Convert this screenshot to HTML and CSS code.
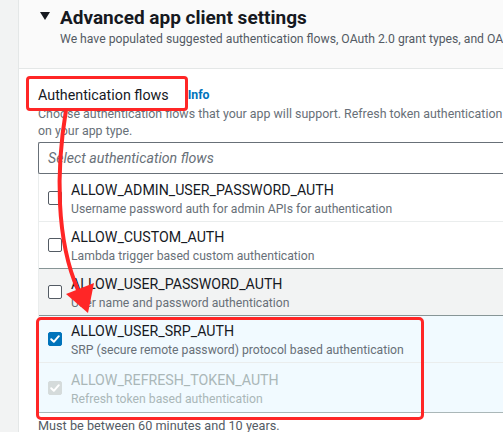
FILE: index.html
```html
<!DOCTYPE html>
<html>
<head>
<meta charset="utf-8">
<link rel="stylesheet" href="styles.css">
</head>
<body>
<div class="page">
  <div class="rail"></div>
  <div class="panel">
    <div class="header">
      <div class="title-row">
        <span class="caret"></span>
        <h2 class="title">Advanced app client settings</h2>
      </div>
      <p class="subtitle">We have populated suggested authentication flows, OAuth 2.0 grant types, and OAuth 2.0 scopes for your app type.</p>
    </div>
    <div class="body">
      <div class="label-row">
        <span class="label">Authentication flows</span>
        <a class="info">Info</a>
      </div>
      <p class="desc">Choose authentication flows that your app will support. Refresh token authentication is always enabled based<br>on your app type.</p>
      <div class="select">Select authentication flows</div>
      <div class="list">
        <div class="option first">
          <span class="box"></span>
          <div class="text">
            <div class="opt-title">ALLOW_ADMIN_USER_PASSWORD_AUTH</div>
            <div class="opt-desc">Username password auth for admin APIs for authentication</div>
          </div>
        </div>
        <div class="option">
          <span class="box"></span>
          <div class="text">
            <div class="opt-title">ALLOW_CUSTOM_AUTH</div>
            <div class="opt-desc">Lambda trigger based custom authentication</div>
          </div>
        </div>
        <div class="option hover">
          <span class="box"></span>
          <div class="text">
            <div class="opt-title">ALLOW_USER_PASSWORD_AUTH</div>
            <div class="opt-desc">User name and password authentication</div>
          </div>
        </div>
        <div class="group">
          <div class="option selected">
            <span class="box checked"><svg viewBox="0 0 14 14" width="14" height="14"><path d="M3.2 7.3 L5.8 9.8 L10.8 4.2" fill="none" stroke="#fff" stroke-width="2" stroke-linecap="round" stroke-linejoin="round"/></svg></span>
            <div class="text">
              <div class="opt-title">ALLOW_USER_SRP_AUTH</div>
              <div class="opt-desc">SRP (secure remote password) protocol based authentication</div>
            </div>
          </div>
          <div class="option selected disabled">
            <span class="box checked dis"><svg viewBox="0 0 14 14" width="14" height="14"><path d="M3.2 7.3 L5.8 9.8 L10.8 4.2" fill="none" stroke="#fff" stroke-width="2" stroke-linecap="round" stroke-linejoin="round"/></svg></span>
            <div class="text">
              <div class="opt-title">ALLOW_REFRESH_TOKEN_AUTH</div>
              <div class="opt-desc">Refresh token based authentication</div>
            </div>
          </div>
        </div>
      </div>
      <p class="hint">Must be between 60 minutes and 10 years.</p>
    </div>
  </div>
  <svg class="arrow" width="503" height="432" viewBox="0 0 503 432">
    <path d="M66 110 C 56 170, 56 240, 78 290" fill="none" stroke="#ff2626" stroke-width="4" stroke-linecap="round"/>
    <polygon points="88,313 66,294 94,283" fill="#ff2626"/>
  </svg>
</div>
</body>
</html>
```
FILE: styles.css
```css
* { box-sizing: border-box; }
html, body { margin: 0; padding: 0; }
body {
  width: 503px;
  height: 432px;
  overflow: hidden;
  font-family: Roboto, "Liberation Sans", sans-serif;
  color: #16191f;
  background: #fff;
}
.page {
  position: relative;
  display: flex;
  height: 432px;
}
.rail {
  width: 19px;
  flex: none;
  background: #f2f3f3;
  border-right: 1px solid #e4e7e7;
}
.panel {
  flex: 1;
  min-width: 0;
  background: #fff;
  overflow: hidden;
}
.header {
  height: 69px;
  background: #fafafa;
  border-bottom: 1px solid #e4e7e7;
  padding: 5px 0 0 21px;
}
.title-row {
  display: flex;
  align-items: center;
  height: 24px;
}
.caret {
  width: 0;
  height: 0;
  border-left: 5px solid transparent;
  border-right: 5px solid transparent;
  border-top: 8px solid #16191f;
  margin-right: 10px;
  margin-top: -2px;
}
.title {
  margin: 0;
  font-size: 19px;
  font-weight: 700;
  white-space: nowrap;
}
.subtitle {
  margin: 2px 0 0 20px;
  font-size: 12.2px;
  line-height: 17px;
  color: #545b64;
  white-space: nowrap;
}
.body {
  padding: 16px 0 0 19px;
}
.label-row {
  display: flex;
  align-items: center;
  height: 20px;
}
.label {
  position: relative;
  font-size: 14.3px;
  white-space: nowrap;
}
.label::after {
  content: "";
  position: absolute;
  left: -12px;
  top: -11px;
  width: 156px;
  height: 29px;
  border: 3.5px solid #ff2626;
  border-radius: 4px;
}
.info {
  margin-left: 19px;
  font-size: 12.3px;
  font-weight: 700;
  color: #0073bb;
}
.desc {
  margin: 0;
  font-size: 12.4px;
  line-height: 17px;
  color: #687078;
  white-space: nowrap;
}
.select {
  margin-top: 3px;
  height: 32px;
  border: 1px solid #687078;
  border-right: none;
  border-radius: 2px 0 0 2px;
  padding: 0 0 0 9px;
  display: flex;
  align-items: center;
  font-size: 14.2px;
  font-style: italic;
  color: #687078;
}
.list {
  border-left: 1px solid #eaeded;
  border-bottom: 1px solid #aab7b8;
}
.option {
  display: flex;
  align-items: center;
  height: 47px;
  padding-left: 9px;
  border-bottom: 1px solid #eaeded;
}
.option.first { height: 48px; }
.box {
  width: 14px;
  height: 14px;
  flex: none;
  border: 1px solid #545b64;
  border-radius: 2px;
  background: #fff;
  margin-right: 9px;
  display: flex;
}
.box.checked {
  background: #0073bb;
  border-color: #0073bb;
}
.box.dis {
  background: #d5dbdb;
  border-color: #d5dbdb;
}
.box svg { margin: -1px; }
.text {
  display: flex;
  flex-direction: column;
  margin-top: 4px;
}
.opt-title {
  font-size: 14.2px;
  line-height: 19px;
  white-space: nowrap;
}
.opt-desc {
  font-size: 12.2px;
  line-height: 19px;
  color: #687078;
  white-space: nowrap;
}
.option.hover {
  background: #f2f3f3;
  border-top: 1px solid #879596;
  border-bottom: 1px solid #879596;
  height: 48px;
  margin-top: -1px;
}
.group {
  position: relative;
}
.group::after {
  content: "";
  position: absolute;
  left: -3px;
  top: 1px;
  width: 382px;
  height: 97px;
  border: 3.5px solid #ff2626;
  border-radius: 5px;
}
.option.selected {
  background: #f1faff;
}
.option.disabled {
  height: 49px;
  border-bottom: none;
}
.option.disabled .opt-title,
.option.disabled .opt-desc {
  color: #aab7b8;
}
.hint {
  margin: 4px 0 0 0;
  font-size: 12.7px;
  line-height: 17px;
  color: #545b64;
  white-space: nowrap;
}
.arrow {
  position: absolute;
  left: 0;
  top: 0;
  pointer-events: none;
}
```
